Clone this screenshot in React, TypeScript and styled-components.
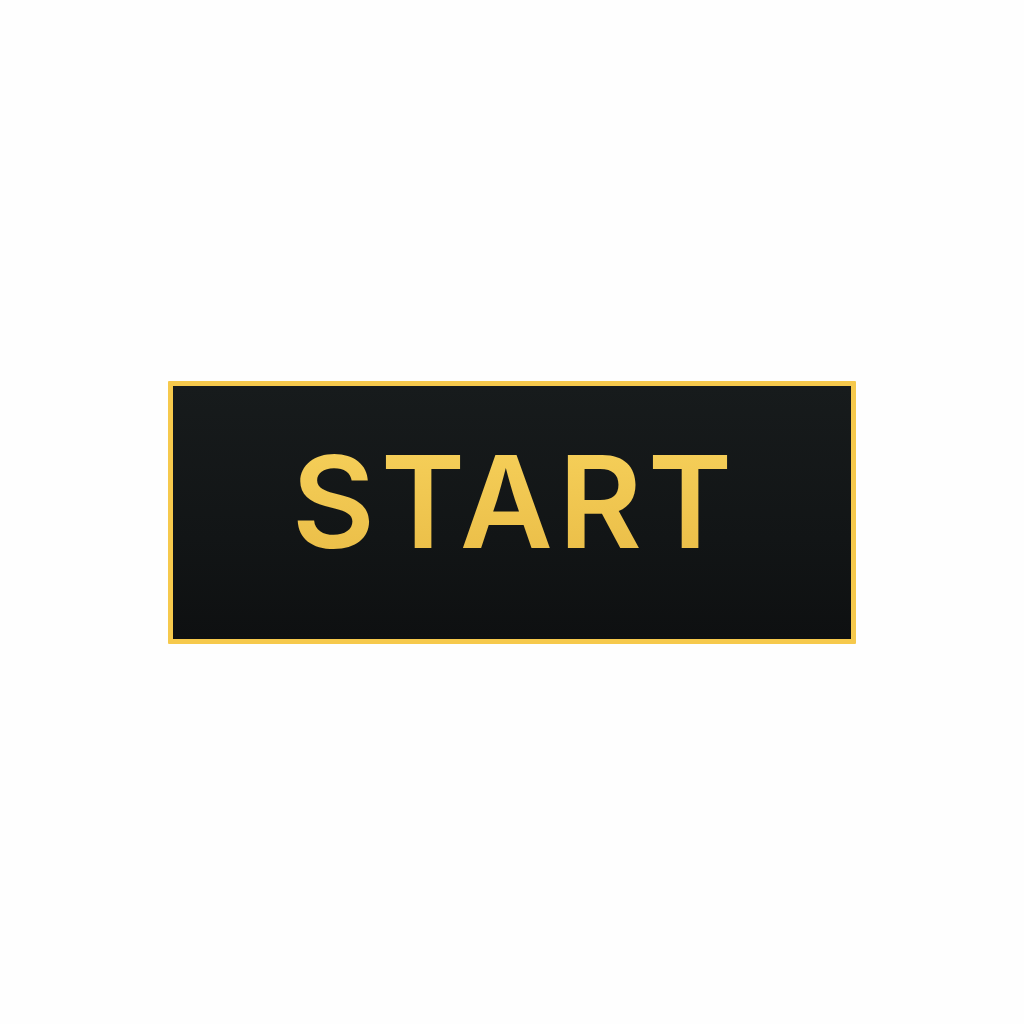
import React from "react";
import styled, { createGlobalStyle } from "styled-components";

const Global = createGlobalStyle`
  html, body { margin: 0; padding: 0; background: #ffffff; }
  #root { min-height: 100vh; }
`;

const Page = styled.div`
  width: 1024px;
  height: 1024px;
  display: flex;
  align-items: center;
  justify-content: center;
  background: #fefefe;
`;

const StartButton = styled.button`
  box-sizing: border-box;
  width: 688px;
  height: 263px;
  border: 5px solid #f6c94c;
  border-radius: 1px;
  background: linear-gradient(180deg, #171b1c 0%, #121516 60%, #0e1011 100%);
  display: flex;
  align-items: center;
  justify-content: center;
  padding: 0 0 20px 0;
  cursor: pointer;
`;

const Label = styled.span`
  font-family: Inter, "Open Sans", sans-serif;
  font-weight: 600;
  font-size: 128px;
  line-height: 1;
  letter-spacing: 0.045em;
  margin-right: -0.045em;
  background: linear-gradient(180deg, #f6d05a 0%, #eabd47 100%);
  -webkit-background-clip: text;
  background-clip: text;
  color: transparent;
`;

export default function App() {
  return (
    <>
      <Global />
      <Page>
        <StartButton>
          <Label>START</Label>
        </StartButton>
      </Page>
    </>
  );
}
